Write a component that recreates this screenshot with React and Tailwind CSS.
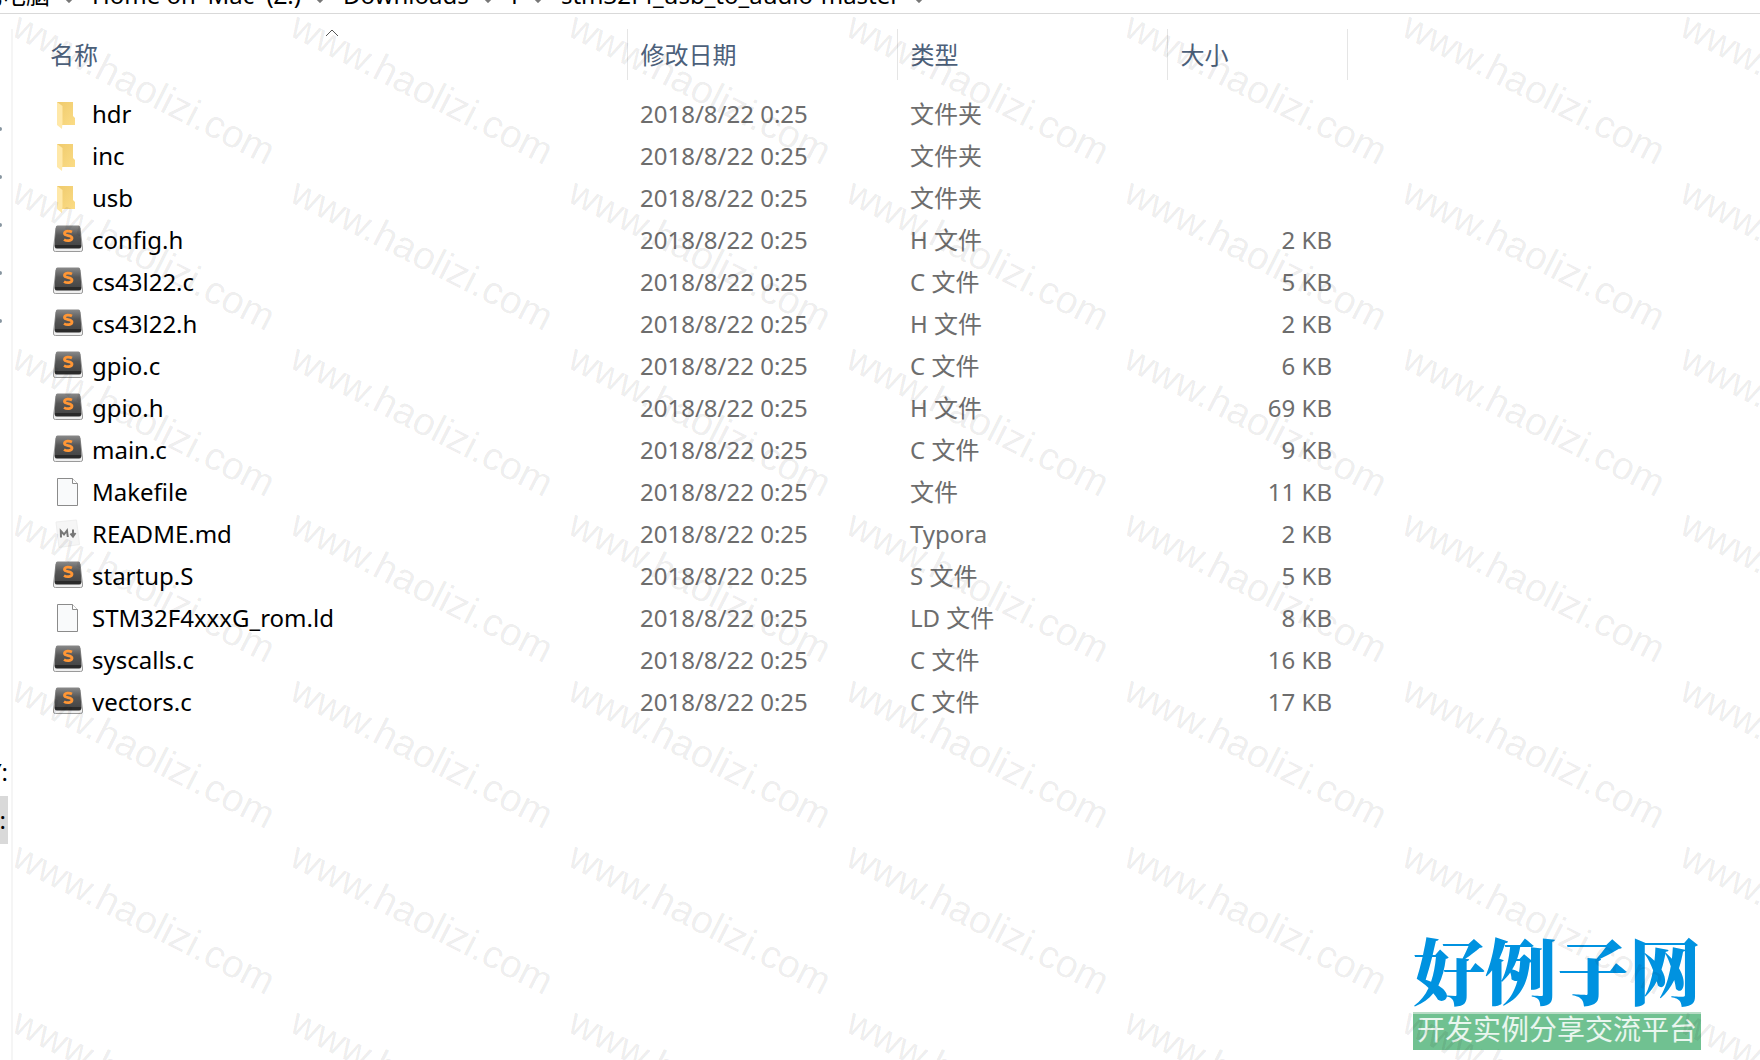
const files = [
  { name: 'hdr', icon: 'folder', type: '文件夹' },
  { name: 'inc', icon: 'folder', type: '文件夹' },
  { name: 'usb', icon: 'folder', type: '文件夹' },
  { name: 'config.h', icon: 'code', type: 'H 文件', size: '2 KB' },
  { name: 'cs43l22.c', icon: 'code', type: 'C 文件', size: '5 KB' },
  { name: 'cs43l22.h', icon: 'code', type: 'H 文件', size: '2 KB' },
  { name: 'gpio.c', icon: 'code', type: 'C 文件', size: '6 KB' },
  { name: 'gpio.h', icon: 'code', type: 'H 文件', size: '69 KB' },
  { name: 'main.c', icon: 'code', type: 'C 文件', size: '9 KB' },
  { name: 'Makefile', icon: 'blank', type: '文件', size: '11 KB' },
  { name: 'README.md', icon: 'markdown', type: 'Typora', size: '2 KB' },
  { name: 'startup.S', icon: 'code', type: 'S 文件', size: '5 KB' },
  { name: 'STM32F4xxxG_rom.ld', icon: 'blank', type: 'LD 文件', size: '8 KB' },
  { name: 'syscalls.c', icon: 'code', type: 'C 文件', size: '16 KB' },
  { name: 'vectors.c', icon: 'code', type: 'C 文件', size: '17 KB' },
];

function FileIcon({ kind }) {
  if (kind === 'folder') {
    return (
      <svg viewBox="0 -2 32 32" className="size-8 shrink-0" aria-hidden="true">
        <defs>
          <linearGradient id="folderBack" x1="0" x2="1" y1="0" y2="1">
            <stop offset="0" stopColor="#efca6c" />
            <stop offset="1" stopColor="#fbdc86" />
          </linearGradient>
        </defs>
        <path d="M5 2H21V16L23 18V25H10L5 22Z" fill="url(#folderBack)" />
        <path d="M5 2L10.500 6V22.500L10 29L5 25Z" fill="#ffe8a8" />
      </svg>
    );
  }
  if (kind === 'code') {
    return (
      <svg viewBox="0 -1 32 32" className="size-8 shrink-0" aria-hidden="true">
        <defs>
          <linearGradient id="keyFace" x1="0" x2="0" y1="0" y2="1">
            <stop offset="0" stopColor="#8a8a8a" />
            <stop offset="0.45" stopColor="#565656" />
            <stop offset="1" stopColor="#434343" />
          </linearGradient>
        </defs>
        <path d="M4 3H28L30.500 23V25Q30.500 26.500 28.500 26.500H3.500Q1.500 26.500 1.500 25V23Z" fill="#efefef" stroke="#9a9a9a" />
        <path d="M5.500 .5H26.500Q28 .5 28.200 2L29.500 21Q29.500 22.500 28 22.500H4Q2.500 22.500 2.500 21L3.800 2Q4 .5 5.500 .5Z" fill="url(#keyFace)" />
        <path d="M3 20H29V22Q29 23.500 27 23.500H5Q3 23.500 3 22Z" fill="#2a2a2a" />
        <path d="M20 7C17.500 5.800 12.500 5.600 12.500 8.500C12.500 11.400 20 9.600 20 13C20 16.400 14.500 16.100 12 14.600" fill="none" stroke="#ff9635" strokeWidth="2.800" />
      </svg>
    );
  }
  if (kind === 'markdown') {
    return (
      <svg viewBox="0 0 32 32" className="size-8 shrink-0" aria-hidden="true">
        <path d="M4 4L24.500 2L27.500 26.500L7 29.500Z" fill="#f6f6f6" stroke="#efefef" />
        <path d="M9 19.500L8.800 13L12 16.500L15 12.500L15.800 19" fill="none" stroke="#777" strokeWidth="2" />
        <path d="M21 11.500V18.500M18.500 15.500L21 18.500L23.500 15" fill="none" stroke="#777" strokeWidth="2" />
      </svg>
    );
  }
  return (
    <svg viewBox="0 0 32 32" className="size-8 shrink-0" aria-hidden="true">
      <path d="M5.500 2.500H20.500L25.500 7.500V29.500H5.500Z" fill="#f9fafb" stroke="#8b8b8b" />
      <path d="M20.500 2.500V7.500H25.500" fill="#fff" stroke="#8b8b8b" />
    </svg>
  );
}

function Chevron() {
  return (
    <svg viewBox="0 0 14 16" className="h-4 w-3.5 shrink-0" aria-hidden="true">
      <path d="M1 8L7 14L13 8" fill="none" stroke="#777" strokeWidth="3" />
    </svg>
  );
}

const crumbs = ['此电脑', "Home on 'Mac' (Z:)", 'Downloads', 'f', 'stm32f4_usb_to_audio-master'];

function AddressBar() {
  return (
    <nav aria-label="路径" className="flex h-3.5 shrink-0 items-end overflow-hidden border-b border-[#d9d9d9] text-black">
      <div className="-ml-6 flex h-9 items-center gap-4 whitespace-nowrap pl-0.5 text-2xl leading-9">
        {crumbs.map((c) => (
          <div key={c} className="flex items-center gap-3">
            <a href="#path">{c}</a>
            <Chevron />
          </div>
        ))}
      </div>
    </nav>
  );
}

function SidePane() {
  return (
    <aside className="w-2 shrink-0 overflow-hidden text-2xl text-black">
      <div className="flex flex-col pt-[91px]">
        {[0, 1, 2, 3, 4].map((n) => (
          <div key={n} className="flex h-12 items-center">
            <span className="h-1 w-0.5 rounded-r-full bg-[#8795a0]" />
          </div>
        ))}
      </div>
      <div className="mt-[403px] flex h-12 items-center justify-end">Y:</div>
      <div className="flex h-12 items-center justify-end bg-[#d9d9d9] pr-0.5">Z:</div>
    </aside>
  );
}

function FileTable() {
  return (
    <table className="w-[1334px] table-fixed border-collapse text-left text-2xl">
      <colgroup>
        <col className="w-[614px]" />
        <col className="w-[270px]" />
        <col className="w-[270px]" />
        <col className="w-[180px]" />
      </colgroup>
      <thead className="text-[#4c607a]">
        <tr className="h-[51px]">
          {['名称', '修改日期', '类型', '大小'].map((h, i) => (
            <th key={h} className="relative border-r border-[#e5e5e5] p-0 pl-[13px] font-normal">
              <button type="button" className={i === 0 ? 'pl-6' : ''}>{h}</button>
              {i === 0 && (
                <svg viewBox="0 0 14 8" className="absolute left-[312px] top-0 h-2 w-3.5" aria-hidden="true">
                  <path d="M1 7L7 1L13 7" fill="none" stroke="#555" />
                </svg>
              )}
            </th>
          ))}
        </tr>
      </thead>
      <tbody className="text-[#6d6d6d]">
        <tr className="h-[13px]" aria-hidden="true"><td colSpan="4" className="p-0" /></tr>
        {files.map((f) => (
          <tr key={f.name} className="h-[42px]">
            <td className="p-0 pl-[39px]">
              <div className="flex items-center gap-2 text-black">
                <FileIcon kind={f.icon} />
                <span>{f.name}</span>
              </div>
            </td>
            <td className="p-0 pl-[13px]">2018/8/22 0:25</td>
            <td className="p-0 pl-[13px]">{f.type}</td>
            <td className="p-0 pr-[15px] text-right">{f.size}</td>
          </tr>
        ))}
      </tbody>
    </table>
  );
}

function Watermark() {
  return (
    <div aria-hidden="true" className="pointer-events-none absolute inset-0 overflow-hidden">
      <div className="grid w-[2231px] auto-rows-[166px] grid-cols-8 pl-[7px] pt-px font-['Liberation_Sans',sans-serif] text-[39px] leading-none text-black/8">
        {Array.from({ length: 56 }, (_, n) => (
          <span key={n} className="origin-bottom-left rotate-27 self-start whitespace-nowrap">www.haolizi.com</span>
        ))}
      </div>
    </div>
  );
}

function SiteLogo() {
  return (
    <div className="absolute bottom-2.5 right-[59px] w-[288px] text-center">
      <div className="whitespace-nowrap pb-1.5 font-['Noto_Serif_CJK_SC','Noto_Sans_CJK_SC',serif] text-[72px] font-black leading-[76px] text-[#0092e0]">好例子网</div>
      <div className="h-[38px] whitespace-nowrap border-t-2 border-[#b8dcc6] bg-[#70c191] text-[28px] leading-[30px] text-white/85">开发实例分享交流平台</div>
    </div>
  );
}

export default function App() {
  return (
    <div className="relative flex min-h-screen flex-col overflow-hidden bg-white font-['Noto_Sans','Noto_Sans_CJK_SC',sans-serif]">
      <AddressBar />
      <div className="flex grow">
        <SidePane />
        <main className="ml-[3px] mt-[15px] grow border-l-2 border-[#f5f5f5]">
          <FileTable />
        </main>
      </div>
      <SiteLogo />
      <Watermark />
    </div>
  );
}
